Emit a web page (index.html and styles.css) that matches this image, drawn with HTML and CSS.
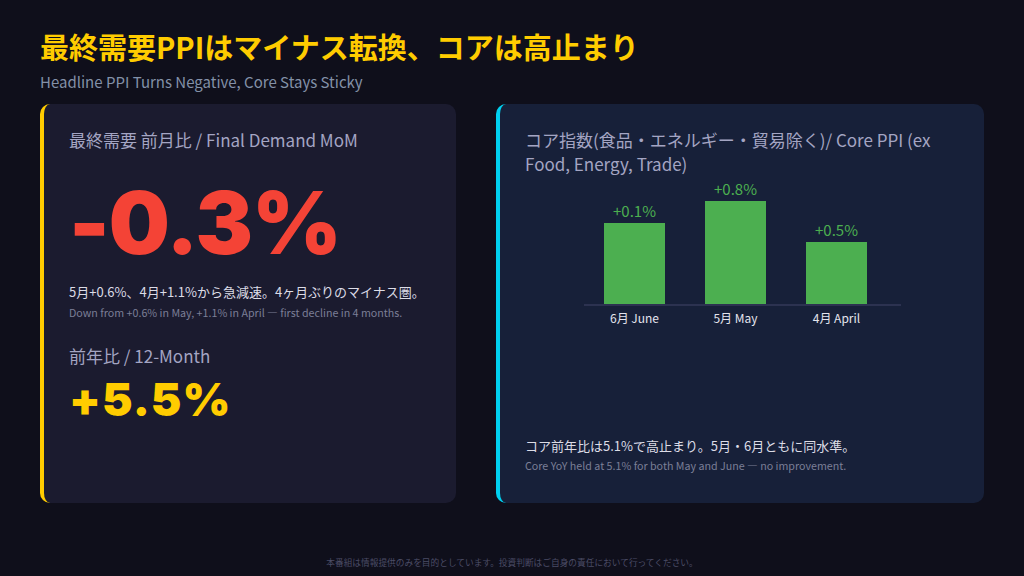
FILE: index.html
```html
<!DOCTYPE html>
<html lang="ja">
<head>
<meta charset="utf-8">
<title>PPI</title>
<link rel="stylesheet" href="styles.css">
</head>
<body>
<div class="page">
  <header class="head">
    <h1 class="title">最終需要PPIはマイナス転換、コアは高止まり</h1>
    <p class="subtitle">Headline PPI Turns Negative, Core Stays Sticky</p>
  </header>
  <main class="cards">
    <section class="card card-left">
      <div class="label">最終需要 前月比 / Final Demand MoM</div>
      <div class="big big-red">-0.3%</div>
      <p class="note">5月+0.6%、4月+1.1%から急減速。4ヶ月ぶりのマイナス圏。</p>
      <p class="note-en">Down from +0.6% in May, +1.1% in April — first decline in 4 months.</p>
      <div class="label label-2">前年比 / 12-Month</div>
      <div class="big-yellow">+5.5%</div>
    </section>
    <section class="card card-right">
      <div class="label">コア指数(食品・エネルギー・貿易除く)/ Core PPI (ex Food, Energy, Trade)</div>
      <div class="chart">
        <div class="bars">
          <div class="col">
            <span class="val">+0.1%</span>
            <div class="bar" style="height:81px"></div>
          </div>
          <div class="col">
            <span class="val">+0.8%</span>
            <div class="bar" style="height:103px"></div>
          </div>
          <div class="col">
            <span class="val">+0.5%</span>
            <div class="bar" style="height:62px"></div>
          </div>
        </div>
        <div class="axis">
          <span class="xl">6月 June</span>
          <span class="xl">5月 May</span>
          <span class="xl">4月 April</span>
        </div>
      </div>
      <div class="foot-note">
        <p class="note">コア前年比は5.1%で高止まり。5月・6月ともに同水準。</p>
        <p class="note-en">Core YoY held at 5.1% for both May and June — no improvement.</p>
      </div>
    </section>
  </main>
  <footer class="disclaimer">本番組は情報提供のみを目的としています。投資判断はご自身の責任において行ってください。</footer>
</div>
</body>
</html>
```

FILE: styles.css
```css
* { box-sizing: border-box; }
html, body {
  margin: 0;
  padding: 0;
  background: #0f0f1b;
}
body {
  font-family: "Noto Sans CJK JP", "Noto Sans", sans-serif;
  color: #e0e0ea;
}
.page {
  width: 1024px;
  height: 576px;
  padding: 28px 40px 0;
  display: flex;
  flex-direction: column;
}
.title {
  margin: 0;
  font-size: 29px;
  line-height: 36px;
  font-weight: 700;
  color: #ffcc00;
}
.subtitle {
  margin: 6px 0 0;
  font-size: 15px;
  line-height: 24px;
  color: #8391a8;
}
.cards {
  margin-top: 10px;
  display: grid;
  grid-template-columns: 416fr 488fr;
  gap: 40px;
  height: 399px;
}
.card {
  border-radius: 10px;
  padding: 24px 25px 29px 25px;
  display: flex;
  flex-direction: column;
}
.card-left {
  background: #1b1b2f;
  border-left: 4px solid #ffcc00;
}
.card-right {
  background: #172039;
  border-left: 4px solid #00d0f0;
}
.label {
  font-size: 17px;
  line-height: 24px;
  color: #a4a5c3;
}
.big {
  font-family: "Inter", "DejaVu Sans", sans-serif;
  font-weight: 900;
  font-size: 86px;
  line-height: 84px;
  margin-top: 29px;
  letter-spacing: -1px;
}
.big-red { color: #f44336; }
.big-yellow {
  font-family: "Inter", "DejaVu Sans", sans-serif;
  font-weight: 900;
  font-size: 46px;
  line-height: 46px;
  letter-spacing: 1px;
  color: #ffcc00;
  margin-top: 8px;
}
.note {
  margin: 17px 0 0;
  font-size: 13px;
  line-height: 20px;
  color: #dcdce6;
  white-space: nowrap;
}
.note-en {
  margin: 3px 0 0;
  font-size: 10.7px;
  line-height: 16px;
  color: #7b7f97;
  white-space: nowrap;
}
.label-2 { margin-top: 23px; }
.chart {
  margin-left: 59px;
  width: 317px;
}
.bars {
  height: 128px;
  display: flex;
  align-items: flex-end;
  gap: 40px;
  padding-left: 20px;
}
.col {
  width: 61px;
  display: flex;
  flex-direction: column;
  align-items: center;
}
.val {
  font-size: 15px;
  line-height: 18px;
  margin-bottom: 3px;
  color: #4caf50;
  white-space: nowrap;
}
.bar {
  width: 61px;
  background: #4caf50;
}
.axis {
  border-top: 2px solid #2c3250;
  display: flex;
  gap: 40px;
  padding: 4px 0 0 20px;
}
.xl {
  width: 61px;
  text-align: center;
  white-space: nowrap;
  font-size: 12px;
  line-height: 16px;
  color: #e4e4ee;
}
.foot-note {
  margin-top: auto;
}
.foot-note .note { margin-top: 0; }
.foot-note .note-en { margin-top: 2px; }
.disclaimer {
  margin-top: auto;
  margin-bottom: 7px;
  text-align: center;
  font-size: 8.7px;
  line-height: 12px;
  color: #4b4c66;
}
```
